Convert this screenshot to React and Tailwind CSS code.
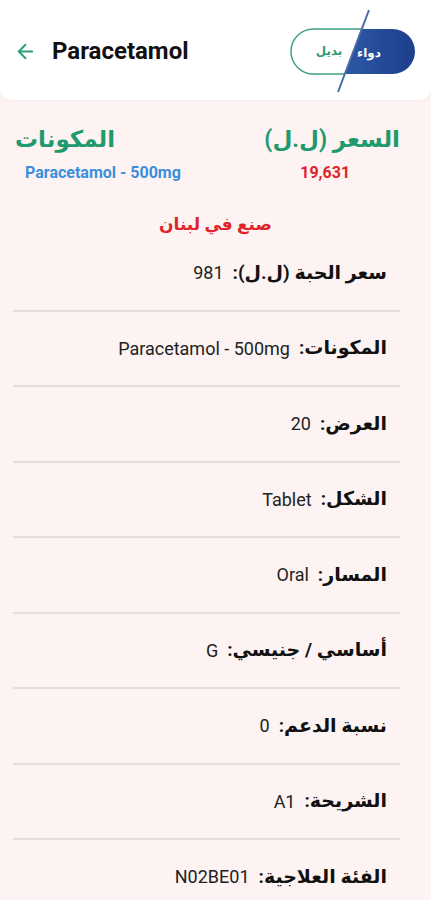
import { ArrowLeft } from "lucide-react";

const rows = [
    { label: "سعر الحبة (ل.ل):", value: "981" },
    { label: "المكونات:", value: "Paracetamol - 500mg" },
    { label: "العرض:", value: "20" },
    { label: "الشكل:", value: "Tablet" },
    { label: "المسار:", value: "Oral" },
    { label: "أساسي / جنيسي:", value: "G" },
    { label: "نسبة الدعم:", value: "0" },
    { label: "الشريحة:", value: "A1" },
    { label: "الفئة العلاجية:", value: "N02BE01" },
];

function PillLogo() {
    return (
        <svg width="131" height="96" viewBox="0 0 131 96">
            <defs>
                <linearGradient id="blue" x1="0" y1="0" x2="1" y2="0">
                    <stop offset="0" stopColor="#3a6bb8" />
                    <stop offset="1" stopColor="#1d3f8c" />
                </linearGradient>
                <clipPath id="right">
                    <polygon points="84,0 131,0 131,96 48,96" />
                </clipPath>
                <clipPath id="left">
                    <polygon points="0,0 84,0 48,96 0,96" />
                </clipPath>
            </defs>
            <g clipPath="url(#left)">
                <rect x="3" y="27" width="124" height="45" rx="22.5" fill="#fff" stroke="#3ea37e" strokeWidth="1.5" />
            </g>
            <g clipPath="url(#right)">
                <rect x="3" y="27" width="124" height="45" rx="22.5" fill="url(#blue)" />
            </g>
            <line x1="81" y1="8" x2="50" y2="90" stroke="#4a6aa8" strokeWidth="2" />
            <text x="41" y="53" fontSize="12" fontWeight="700" fill="#2e9c74" textAnchor="middle" fontFamily="'DejaVu Sans', sans-serif">بديل</text>
            <text x="81" y="55" fontSize="12" fontWeight="700" fill="#fff" textAnchor="middle" fontFamily="'DejaVu Sans', sans-serif">دواء</text>
        </svg>
    );
}

export default function App() {
    return (
        <div className="min-h-screen bg-[#fcf3f2] font-['Roboto','DejaVu_Sans',sans-serif]">
            <div className="bg-white h-[100px] rounded-b-xl flex items-center justify-between pl-[14px] pr-[12px] shadow-[0_1px_3px_rgba(0,0,0,0.04)]">
                <div className="flex items-center gap-[15px] pt-[2px]">
                    <ArrowLeft size={23} strokeWidth={2} className="text-[#2e9e78]" />
                    <span className="text-[24px] font-bold text-[#111]">Paracetamol</span>
                </div>
                <PillLogo />
            </div>

            <div className="flex justify-between pt-[22px] pl-[15px] pr-[31px]">
                <div className="flex flex-col items-start">
                    <span dir="rtl" className="text-[23px] font-bold text-[#1f9a6e] leading-[36px]">المكونات</span>
                    <span className="text-[16px] font-bold text-[#3a8fdc] mt-[3px] ml-[10px] leading-[24px]">Paracetamol - 500mg</span>
                </div>
                <div className="flex flex-col items-center">
                    <span dir="rtl" className="text-[23px] font-bold text-[#1f9a6e] leading-[36px]">السعر (ل.ل)</span>
                    <span className="text-[16px] font-bold text-[#e0252a] mt-[3px] mr-[14px] leading-[24px]">19,631</span>
                </div>
            </div>

            <div className="text-center text-[17px] font-bold text-[#e0252a] mt-[26px] leading-[26px]" dir="rtl">صنع في لبنان</div>

            <div dir="rtl" className="mr-[31px] ml-[13px] -mt-[1px]">
                {rows.map((row, i) => (
                    <div key={i}>
                        {i > 0 && <div className="h-[2px] bg-[#e5dedd]" />}
                        <div className="h-[73.5px] flex items-center gap-[9px] pr-[13px]">
                            <span className="text-[19px] font-bold text-[#111]">{row.label}</span>
                            <span className="text-[18px] text-[#222]" dir="ltr">{row.value}</span>
                        </div>
                    </div>
                ))}
            </div>
        </div>
    );
}
